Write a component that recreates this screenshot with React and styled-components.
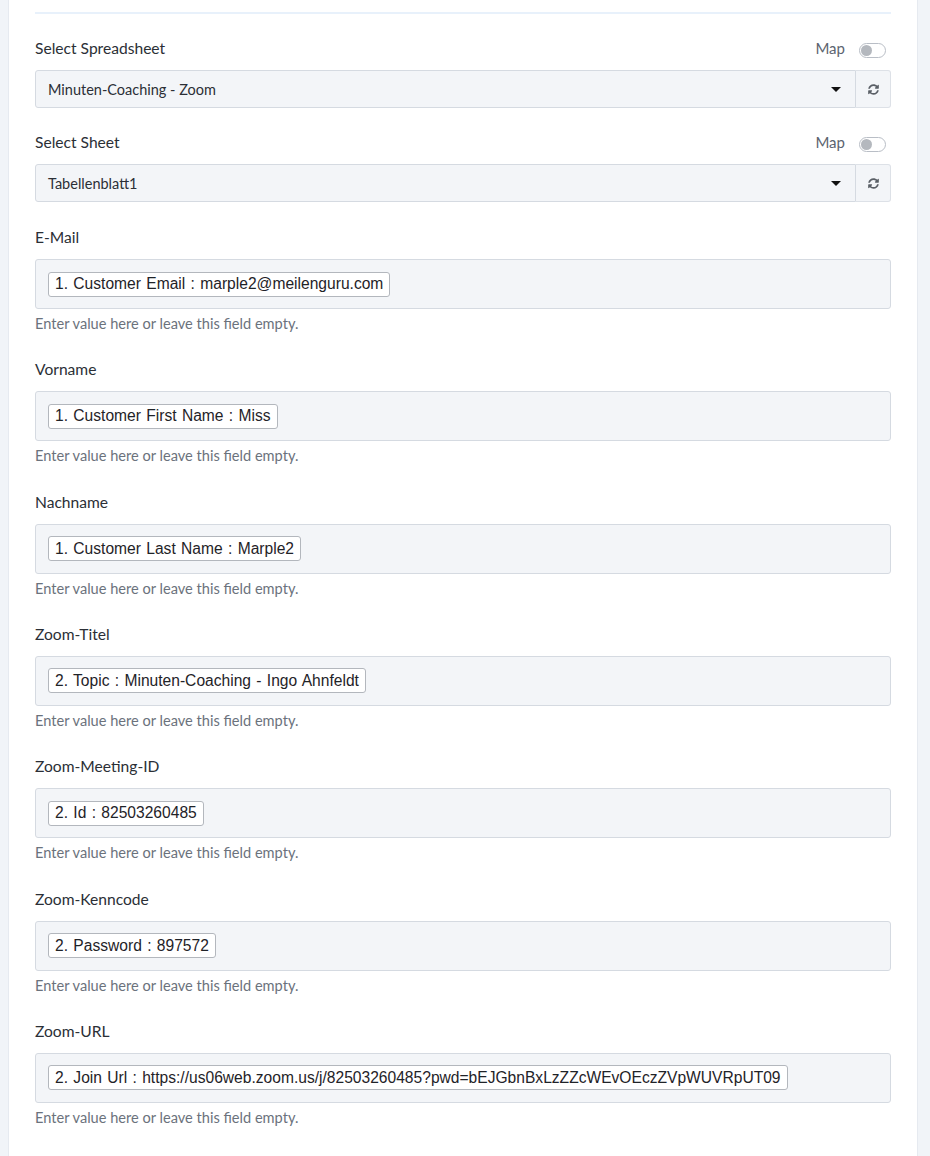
import React from 'react';
import styled, { createGlobalStyle } from 'styled-components';
import { FaSyncAlt } from 'react-icons/fa';

const GlobalStyle = createGlobalStyle`
  html, body {
    margin: 0;
    padding: 0;
    background: #f1f4f8;
    font-family: Lato, 'Open Sans', sans-serif;
    color: #2b2f36;
  }
  * {
    box-sizing: border-box;
  }
`;

const Page = styled.div`
  min-height: 1156px;
  padding-left: 8px;
`;

const Card = styled.div`
  width: 910px;
  min-height: 1156px;
  background: #fff;
  border-left: 1px solid #e6eaf0;
  border-right: 1px solid #e6eaf0;
  padding: 12px 26px 0 26px;
`;

const Divider = styled.div`
  height: 2px;
  background: #e8f1fb;
  margin-bottom: 24px;
`;

const Field = styled.div`
  margin-bottom: ${(p) => p.$gap}px;
`;

const LabelRow = styled.div`
  display: flex;
  align-items: center;
  justify-content: space-between;
  height: 20px;
  margin-bottom: 12px;
`;

const Label = styled.label`
  font-size: 15.6px;
  line-height: 20px;
  color: #2b2f36;
`;

const MapToggle = styled.div`
  display: flex;
  align-items: center;
  gap: 14px;
  padding-right: 5px;
  font-size: 15px;
  color: #5c6470;
`;

const Switch = styled.span`
  position: relative;
  display: inline-block;
  width: 27px;
  height: 15px;
  margin-top: 4px;
  border: 1px solid #b9bec6;
  border-radius: 8px;
  background: #fff;

  &::after {
    content: '';
    position: absolute;
    left: 1px;
    top: 1px;
    width: 11px;
    height: 11px;
    border-radius: 50%;
    background: #b4b8be;
  }
`;

const SelectGroup = styled.div`
  display: flex;
  height: 38px;
`;

const Select = styled.div`
  flex: 1;
  display: flex;
  align-items: center;
  justify-content: space-between;
  padding: 0 12px;
  background: #f3f5f8;
  border: 1px solid #d5dae1;
  border-radius: 3px 0 0 3px;
  font-size: 14.5px;
  color: #2b2f36;
`;

const Caret = styled.span`
  width: 0;
  height: 0;
  border-left: 5px solid transparent;
  border-right: 5px solid transparent;
  border-top: 5px solid #111;
  margin-right: 2px;
`;

const RefreshButton = styled.button`
  width: 35px;
  display: flex;
  align-items: center;
  justify-content: center;
  padding: 0;
  background: #f3f5f8;
  border: 1px solid #dde1e7;
  border-left: none;
  border-radius: 0 3px 3px 0;
  color: #5a5f66;
  font-size: 11px;
`;

const MapBox = styled.div`
  height: 50px;
  display: flex;
  align-items: center;
  padding: 0 12px;
  background: #f3f5f8;
  border: 1px solid #d5dae1;
  border-radius: 3px;
`;

const Chip = styled.span`
  display: inline-flex;
  align-items: center;
  height: 25px;
  padding: 0 6px;
  background: #fff;
  border: 1px solid #b3b7bd;
  border-radius: 3px;
  font-family: 'Liberation Sans', Arial, sans-serif;
  font-size: 15.6px;
  word-spacing: 1px;
  color: #1f2328;
  white-space: nowrap;
`;

const Help = styled.div`
  margin-top: 7px;
  font-size: 14.6px;
  line-height: 15px;
  color: #6b727c;
`;

const selects = [
  { label: 'Select Spreadsheet', value: 'Minuten-Coaching - Zoom', gap: 24 },
  { label: 'Select Sheet', value: 'Tabellenblatt1', gap: 25 },
];

const fields = [
  { label: 'E-Mail', value: '1. Customer Email : marple2@meilenguru.com' },
  { label: 'Vorname', value: '1. Customer First Name : Miss' },
  { label: 'Nachname', value: '1. Customer Last Name : Marple2' },
  { label: 'Zoom-Titel', value: '2. Topic : Minuten-Coaching - Ingo Ahnfeldt' },
  { label: 'Zoom-Meeting-ID', value: '2. Id : 82503260485' },
  { label: 'Zoom-Kenncode', value: '2. Password : 897572' },
  {
    label: 'Zoom-URL',
    value:
      '2. Join Url : https://us06web.zoom.us/j/82503260485?pwd=bEJGbnBxLzZZcWEvOEczZVpWUVRpUT09',
  },
];

export default function App() {
  return (
    <>
      <GlobalStyle />
      <Page>
        <Card>
          <Divider />
          {selects.map((s) => (
            <Field key={s.label} $gap={s.gap}>
              <LabelRow>
                <Label>{s.label}</Label>
                <MapToggle>
                  Map
                  <Switch />
                </MapToggle>
              </LabelRow>
              <SelectGroup>
                <Select>
                  {s.value}
                  <Caret />
                </Select>
                <RefreshButton>
                  <FaSyncAlt />
                </RefreshButton>
              </SelectGroup>
            </Field>
          ))}
          {fields.map((f) => (
            <Field key={f.label} $gap={28.33}>
              <LabelRow>
                <Label>{f.label}</Label>
              </LabelRow>
              <MapBox>
                <Chip>{f.value}</Chip>
              </MapBox>
              <Help>Enter value here or leave this field empty.</Help>
            </Field>
          ))}
        </Card>
      </Page>
    </>
  );
}
